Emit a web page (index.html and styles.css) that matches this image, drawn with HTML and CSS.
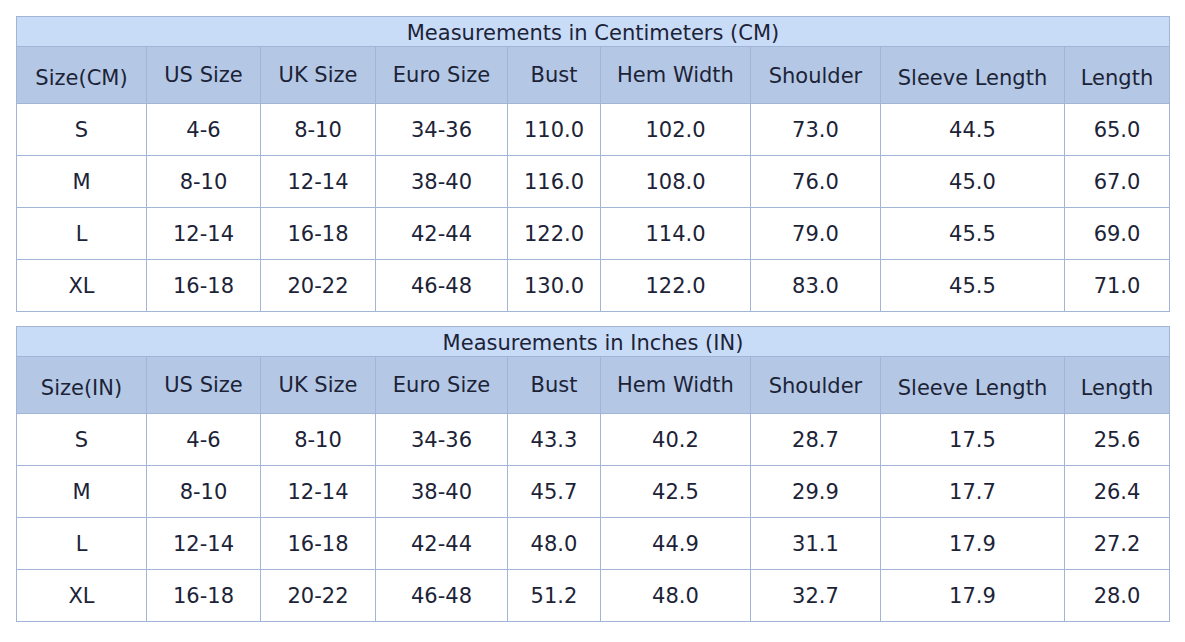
FILE: index.html
```html
<!DOCTYPE html>
<html>
<head>
<meta charset="utf-8">
<link rel="stylesheet" href="styles.css">
</head>
<body>
<div class="page">
<table class="chart">
  <colgroup>
    <col class="c1"><col class="c2"><col class="c3"><col class="c4"><col class="c5"><col class="c6"><col class="c7"><col class="c8"><col class="c9">
  </colgroup>
  <tr class="title"><td colspan="9">Measurements in Centimeters (CM)</td></tr>
  <tr class="head">
    <th class="low">Size(CM)</th><th>US Size</th><th>UK Size</th><th>Euro Size</th><th>Bust</th><th>Hem Width</th><th class="mid">Shoulder</th><th class="low">Sleeve Length</th><th class="low">Length</th>
  </tr>
  <tr><td>S</td><td>4-6</td><td>8-10</td><td>34-36</td><td>110.0</td><td>102.0</td><td>73.0</td><td>44.5</td><td>65.0</td></tr>
  <tr><td>M</td><td>8-10</td><td>12-14</td><td>38-40</td><td>116.0</td><td>108.0</td><td>76.0</td><td>45.0</td><td>67.0</td></tr>
  <tr><td>L</td><td>12-14</td><td>16-18</td><td>42-44</td><td>122.0</td><td>114.0</td><td>79.0</td><td>45.5</td><td>69.0</td></tr>
  <tr><td>XL</td><td>16-18</td><td>20-22</td><td>46-48</td><td>130.0</td><td>122.0</td><td>83.0</td><td>45.5</td><td>71.0</td></tr>
</table>
<table class="chart">
  <colgroup>
    <col class="c1"><col class="c2"><col class="c3"><col class="c4"><col class="c5"><col class="c6"><col class="c7"><col class="c8"><col class="c9">
  </colgroup>
  <tr class="title"><td colspan="9">Measurements in Inches (IN)</td></tr>
  <tr class="head">
    <th class="low">Size(IN)</th><th>US Size</th><th>UK Size</th><th>Euro Size</th><th>Bust</th><th>Hem Width</th><th class="mid">Shoulder</th><th class="low">Sleeve Length</th><th class="low">Length</th>
  </tr>
  <tr><td>S</td><td>4-6</td><td>8-10</td><td>34-36</td><td>43.3</td><td>40.2</td><td>28.7</td><td>17.5</td><td>25.6</td></tr>
  <tr><td>M</td><td>8-10</td><td>12-14</td><td>38-40</td><td>45.7</td><td>42.5</td><td>29.9</td><td>17.7</td><td>26.4</td></tr>
  <tr><td>L</td><td>12-14</td><td>16-18</td><td>42-44</td><td>48.0</td><td>44.9</td><td>31.1</td><td>17.9</td><td>27.2</td></tr>
  <tr><td>XL</td><td>16-18</td><td>20-22</td><td>46-48</td><td>51.2</td><td>48.0</td><td>32.7</td><td>17.9</td><td>28.0</td></tr>
</table>
</div>
</body>
</html>
```
FILE: styles.css
```css
html, body {
  margin: 0;
  padding: 0;
  background: #ffffff;
}
.page {
  padding: 16px 16px 0 16px;
  display: flex;
  flex-direction: column;
  gap: 14px;
}
.chart {
  width: 1153px;
  border-collapse: collapse;
  table-layout: fixed;
  font-family: "DejaVu Sans", Verdana, sans-serif;
  font-size: 21px;
  color: #1c2337;
}
.c1 { width: 130px; }
.c2 { width: 114px; }
.c3 { width: 115px; }
.c4 { width: 132px; }
.c5 { width: 93px; }
.c6 { width: 150px; }
.c7 { width: 130px; }
.c8 { width: 184px; }
.c9 { width: 105px; }
.chart td, .chart th {
  border: 1px solid #a3b5d6;
  text-align: center;
  padding: 0;
  font-weight: normal;
  height: 51px;
  vertical-align: middle;
  line-height: 24px;
}
.chart .title td {
  background: #c9dcf7;
  height: 26px;
  padding-top: 3px;
}
.chart .head th {
  background: #b4c8e5;
  height: 56px;
}
.chart .head th.low {
  padding-top: 6px;
  height: 50px;
}
.chart .head th.mid {
  padding-top: 2px;
  height: 54px;
}
```
